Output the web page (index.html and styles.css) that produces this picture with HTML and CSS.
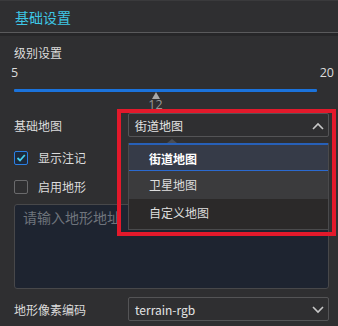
FILE: index.html
```html
<!DOCTYPE html>
<html>
<head>
  <meta charset="utf8">
  <title>基础设置</title>
  <link rel="stylesheet" href="styles.css">
</head>
<body>

<div class="panel">
  <div class="panel-head">基础设置</div>
  <div class="panel-sep"></div>

  <div class="panel-body">
    <div class="field-title">级别设置</div>
    <div class="range-ends">
      <span>5</span>
      <span>20</span>
    </div>
    <div class="slider">
      <div class="slider-track"></div>
      <div class="slider-thumb" style="left: 46.7%">
        <span class="thumb-arrow"></span>
        <span class="thumb-value">12</span>
      </div>
    </div>

    <div class="form-row row-map">
      <label>基础地图</label>
      <div class="select">
        <span>街道地图</span>
        <svg class="chev" width="12" height="8" viewBox="0 0 12 8"><path d="M1 7 L6 2 L11 7" fill="none" stroke="#c8c8c8" stroke-width="1.6"/></svg>
      </div>
    </div>

    <div class="check-row first">
      <span class="check checked">
        <svg width="10" height="10" viewBox="0 0 10 10"><path d="M1.5 5 L4 7.5 L8.8 2" fill="none" stroke="#45d0ee" stroke-width="1.8"/></svg>
      </span>
      <span>显示注记</span>
    </div>
    <div class="check-row">
      <span class="check"></span>
      <span>启用地形</span>
    </div>

    <div class="textarea">请输入地形地址</div>

    <div class="form-row">
      <label>地形像素编码</label>
      <div class="select">
        <span>terrain-rgb</span>
        <svg class="chev" width="12" height="8" viewBox="0 0 12 8"><path d="M1 1 L6 6 L11 1" fill="none" stroke="#c8c8c8" stroke-width="1.6"/></svg>
      </div>
    </div>
  </div>

  <!-- open dropdown of 基础地图 -->
  <div class="dropdown">
    <span class="drop-arrow"></span>
    <div class="drop-item active">街道地图</div>
    <div class="drop-item">卫星地图</div>
    <div class="drop-item dark">自定义地图</div>
  </div>

  <div class="mark"></div>
</div>

</body>
</html>
```

FILE: styles.css
```css
body { margin: 0; padding: 0; background: #2f2f31; font-family: "Noto Sans CJK SC", "Noto Sans", sans-serif; font-size: 12px; color: #dcdcdc; }
.panel { position: relative; width: 338px; height: 326px; overflow: hidden; }

.panel-head { height: 33px; line-height: 32px; padding-left: 15px; font-size: 14px; color: #3ec6e4; border-top: 1px solid #3a3a3c; box-sizing: border-box; border-bottom: 1px solid #5a5a5c; }
.panel-sep { height: 3px; background: #262628; }

.panel-body { padding: 0 9px 0 14px; display: flex; flex-direction: column; }
.field-title { margin-top: 8px; line-height: 18px; }
.range-ends { display: flex; justify-content: space-between; margin: 2px -5px 0 -3px; line-height: 18px; font-family: "Open Sans", "Noto Sans", sans-serif; font-size: 12.5px; }

.slider { position: relative; height: 26px; margin-right: 12px; }
.slider-track { margin-top: 7px; height: 3px; background: #1b73dc; border-radius: 1px; }
.slider-thumb { position: absolute; top: 10px; width: 20px; margin-left: -10px; display: flex; flex-direction: column; align-items: center; }
.thumb-arrow { width: 0; height: 0; border-left: 4px solid transparent; border-right: 4px solid transparent; border-bottom: 7px solid #a8a8a8; }
.thumb-value { line-height: 12px; margin-top: 0; color: #999; font-family: "Open Sans", sans-serif; font-size: 12.5px; }

.form-row { display: flex; align-items: center; height: 24px; }
.form-row label { width: 114px; }
.row-map { margin-top: 5px; }
.select { flex: 1; height: 24px; box-sizing: border-box; border: 1px solid #545456; border-radius: 2px; display: flex; align-items: center; justify-content: space-between; padding: 0 4px 0 6px; color: #e4e4e4; }
.select .chev { margin-top: 1px; }

.check-row { display: flex; align-items: center; height: 29px; gap: 10px; }
.check-row.first { margin-top: 6px; }
.check { width: 14px; height: 14px; box-sizing: border-box; border: 1px solid #6a6a6c; border-radius: 2px; display: flex; align-items: center; justify-content: center; }
.check.checked { border-color: #2b7fe4; background: #1d2a3c; }

.textarea { height: 85px; box-sizing: border-box; margin-top: 3px; margin-bottom: 8px; background: #1e2430; border: 1px solid #48484a; border-radius: 3px; padding: 2px 8px; font-size: 14px; color: #6f747c; }

.dropdown { position: absolute; left: 128px; top: 143px; width: 201px; box-sizing: border-box; border: 1px solid #4a4a4c; border-top: 0; background: #2b2929; }
.drop-arrow { position: absolute; left: 38px; top: -4px; width: 0; height: 0; border-left: 5px solid transparent; border-right: 5px solid transparent; border-bottom: 4px solid #4a4d55; }
.drop-item { height: 28px; line-height: 27px; padding-left: 20px; color: #dedede; background: #3b3b3d; }
.drop-item.active { background: #363b48; border-top: 2px solid #2760b8; border-bottom: 1px solid #2b6ad0; height: 25px; color: #fff; font-weight: bold; }
.drop-item.dark { background: #2b2929; height: 30px; }

.mark { position: absolute; left: 117px; top: 109px; width: 219px; height: 127px; box-sizing: border-box; border: 4px solid #e3192b; }
```
